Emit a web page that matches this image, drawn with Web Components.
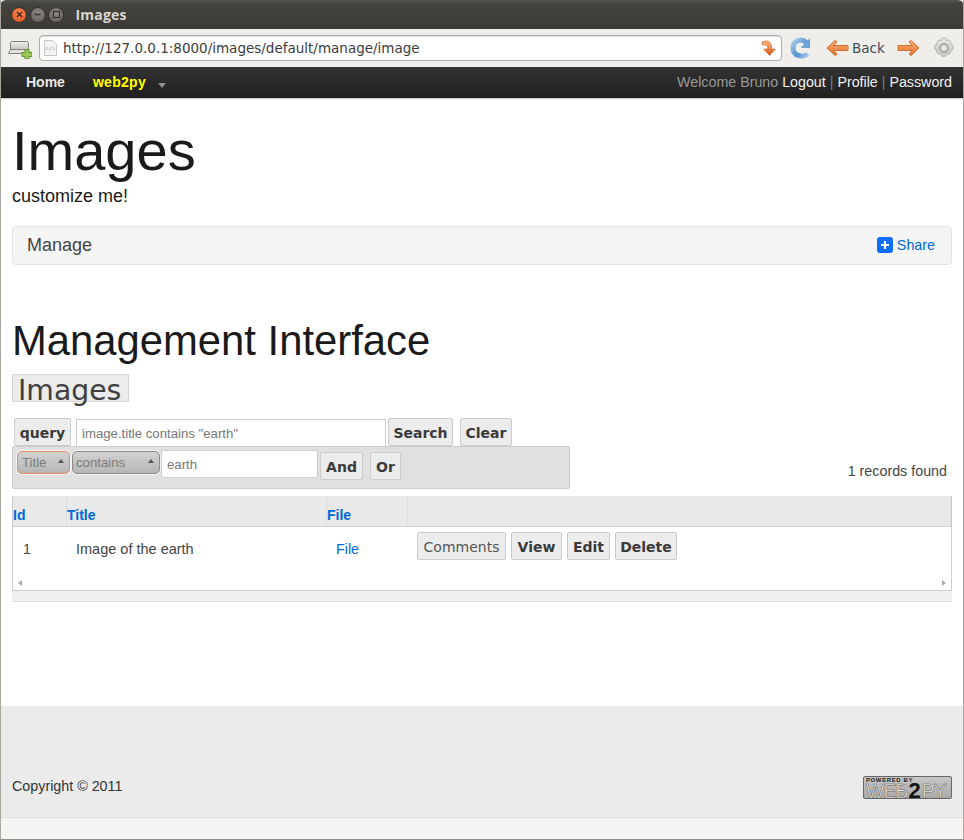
<!DOCTYPE html>
<html>
<head>
<meta charset="utf-8">
<title>Images</title>
<style>
  html, body { margin: 0; padding: 0; }
  body { font-family: "Liberation Sans", Arial, sans-serif; background: #fff; }
</style>
</head>
<body>
<browser-window>
  <title-bar slot="chrome">Images</title-bar>
  <tool-bar slot="chrome" url="http://127.0.0.1:8000/images/default/manage/image"></tool-bar>
  <nav-bar slot="chrome"></nav-bar>
  <page-header title-text="Images" subtitle="customize me!"></page-header>
  <manage-bar label="Manage"></manage-bar>
  <grid-section></grid-section>
  <page-footer slot="footer"></page-footer>
</browser-window>

<script>
class BrowserWindow extends HTMLElement {
    constructor() {
        super();
        this.attachShadow({ mode: 'open' });
    }

    connectedCallback() {
        this.shadowRoot.innerHTML = `
            <style>
                :host {
                    display: flex;
                    flex-direction: column;
                    box-sizing: border-box;
                    width: 964px;
                    height: 840px;
                    overflow: hidden;
                    border-left: 1px solid #a9a6a0;
                    border-right: 1px solid #a9a6a0;
                    border-bottom: 1px solid #8f8d88;
                    background: #fff;
                }
                .page {
                    flex: 1;
                    padding: 0 11px;
                    min-height: 0;
                }
            </style>
            <slot name="chrome"></slot>
            <div class="page"><slot></slot></div>
            <slot name="footer"></slot>
        `;
    }
}

class TitleBar extends HTMLElement {
    constructor() {
        super();
        this.attachShadow({ mode: 'open' });
    }

    connectedCallback() {
        this.shadowRoot.innerHTML = `
            <style>
                :host {
                    display: flex;
                    align-items: center;
                    height: 29px;
                    margin: 0 -1px;
                    padding-left: 11px;
                    box-sizing: border-box;
                    background: linear-gradient(#55534d 0, #45433e 4px, #3b3a36 100%);
                    border-radius: 6px 6px 0 0;
                    color: #d9d6ce;
                    font: bold 14px "Open Sans", "Noto Sans", sans-serif;
                    letter-spacing: 0.2px;
                }
                .btn {
                    width: 14px;
                    height: 14px;
                    border-radius: 50%;
                    margin-right: 2.500px;
                    background: radial-gradient(circle at 50% 35%, #8d8a83, #5d5b55);
                    border: 1px solid #34332f;
                    display: flex;
                    align-items: center;
                    justify-content: center;
                }
                .btn.close { background: radial-gradient(circle at 50% 35%, #f58a56, #dc4a1c); }
                svg { display: block; }
                .text { margin-left: 9px; }
            </style>
            <span class="btn close"><svg width="9" height="9" viewBox="0 0 9 9"><path d="M2 2l5 5M7 2l-5 5" stroke="#4a2010" stroke-width="1.4"/></svg></span>
            <span class="btn"><svg width="9" height="9" viewBox="0 0 9 9"><path d="M1.500 4.500h6" stroke="#33322e" stroke-width="1.6"/></svg></span>
            <span class="btn"><svg width="9" height="9" viewBox="0 0 9 9"><rect x="1.500" y="1.500" width="6" height="6" fill="none" stroke="#33322e" stroke-width="1.2"/></svg></span>
            <span class="text"><slot></slot></span>
        `;
    }
}

class ToolBar extends HTMLElement {
    constructor() {
        super();
        this.attachShadow({ mode: 'open' });
    }

    connectedCallback() {
        const url = this.getAttribute('url') || '';
        this.shadowRoot.innerHTML = `
            <style>
                :host {
                    display: flex;
                    align-items: center;
                    height: 38px;
                    box-sizing: border-box;
                    padding: 0 0 0 7px;
                    background: #f0eeeb;
                    color: #3c3c3c;
                    font: 13.5px "DejaVu Sans", sans-serif;
                }
                svg { display: block; flex: none; }
                .url {
                    display: flex;
                    flex: none;
                    align-items: center;
                    box-sizing: border-box;
                    width: 743px;
                    height: 26px;
                    margin: 0 8px 0 7px;
                    padding: 0 4px 0 4px;
                    background: #fff;
                    border: 1px solid #aeaca7;
                    border-radius: 4px;
                    box-shadow: inset 0 1px 1px #ddd;
                }
                .addr { flex: 1; margin-left: 6px; white-space: nowrap; }
                .back { margin: 0 12px 0 3px; color: #3c4a5a; }
                .gear { margin-left: 13px; }
            </style>
            <svg width="24" height="22" viewBox="0 0 24 22">
                <defs><linearGradient id="l1" x1="0" y1="0" x2="0" y2="1"><stop offset="0" stop-color="#efeeeb"/><stop offset="1" stop-color="#c6c4bf"/></linearGradient></defs>
                <path d="M3.500 4.500h16l1 1v7h-18v-7z" fill="url(#l1)" stroke="#7f7d78"/>
                <path d="M2.500 12.500h18l1 4h-21z" fill="#e4e2dd" stroke="#7f7d78"/>
                <path d="M17 12.500h4v3h3v4h-3v2.500h-4v-2.500h-3v-4h3z" fill="#9ccb5a" stroke="#5f8f2c"/>
            </svg>
            <div class="url">
                <svg width="13" height="16" viewBox="0 0 13 16">
                    <path d="M.5.500h8l4 4v11h-12z" fill="#f3f3f3" stroke="#c5c5c5"/>
                    <path d="M3.500 10l-1-1.500 1-1.500M9 10l1-1.500-1-1.500M7 6.500l-1.500 4" fill="none" stroke="#b4b4b4"/>
                </svg>
                <span class="addr">${url}</span>
                <svg width="16" height="18" viewBox="0 0 16 18">
                    <defs><linearGradient id="o1" x1="0" y1="0" x2="0" y2="1"><stop offset="0" stop-color="#f6b27c"/><stop offset="1" stop-color="#d95a18"/></linearGradient></defs>
                    <path d="M1 3c5.500-2.500 9.500-.5 9.500 5v2h4l-6 6.500-6-6.500h4v-1.500c0-2.500-2-3-5-2.500z" fill="url(#o1)" stroke="#d0641f" stroke-width=".6"/>
                </svg>
            </div>
            <svg width="22" height="22" viewBox="0 0 22 22">
                <defs><linearGradient id="b1" x1="0" y1="0" x2="1" y2="1"><stop offset="0" stop-color="#a9cdec"/><stop offset=".6" stop-color="#4f8fd0"/><stop offset="1" stop-color="#a9cdec"/></linearGradient></defs>
                <path d="M18 17c-4.500 4-15 2.500-15-6 0-8 9-10 13.500-5.500" fill="none" stroke="url(#b1)" stroke-width="5"/>
                <path d="M20 1v10h-9.500z" fill="#6ba4da"/>
            </svg>
            <svg style="margin-left:14px" width="23" height="18" viewBox="0 0 23 18">
                <defs><linearGradient id="o2" x1="0" y1="0" x2="0" y2="1"><stop offset="0" stop-color="#f6b27c"/><stop offset="1" stop-color="#e2702a"/></linearGradient></defs>
                <path d="M1 9l8-7.500 2 1.500-3.500 3.500h14.500v5h-14.500l3.500 3.500-2 1.500z" fill="url(#o2)" stroke="#d9702a" stroke-linejoin="round"/>
            </svg>
            <span class="back">Back</span>
            <svg width="23" height="18" viewBox="0 0 23 18">
                <defs><linearGradient id="o3" x1="0" y1="0" x2="0" y2="1"><stop offset="0" stop-color="#f6b27c"/><stop offset="1" stop-color="#e2702a"/></linearGradient></defs>
                <path d="M22 9l-8-7.500-2 1.500 3.500 3.500h-14.500v5h14.500l-3.500 3.500 2 1.500z" fill="url(#o3)" stroke="#d9702a" stroke-linejoin="round"/>
            </svg>
            <svg class="gear" width="22" height="22" viewBox="0 0 22 22">
                <defs><linearGradient id="g1" x1="0" y1="0" x2="0" y2="1"><stop offset="0" stop-color="#eaeae8"/><stop offset="1" stop-color="#c8c8c6"/></linearGradient></defs>
                <path d="M9 1h4l.6 2.800 2-.9 2.700 2.700-1.100 2 2.800.7v4l-2.800.6.900 2-2.700 2.700-2-1.100-.7 2.800h-4l-.6-2.800-2 1.100-2.700-2.700 1.100-2-2.800-.6v-4l2.800-.7-1.100-2 2.700-2.700 2 .9z" fill="url(#g1)" stroke="#a9a9a7" stroke-width=".8"/>
                <circle cx="11" cy="11" r="4.500" fill="#bdbdbb" stroke="#9c9c9a"/>
                <circle cx="11" cy="11" r="2.500" fill="#ececea"/>
            </svg>
        `;
    }
}

class NavBar extends HTMLElement {
    constructor() {
        super();
        this.attachShadow({ mode: 'open' });
    }

    connectedCallback() {
        this.shadowRoot.innerHTML = `
            <style>
                :host {
                    display: flex;
                    align-items: center;
                    height: 31px;
                    box-sizing: border-box;
                    padding: 0 11px 2px 25px;
                    background: linear-gradient(#333, #1e1e1e);
                    box-shadow: 0 1px 1px #ccc;
                    font: 14.25px "Liberation Sans", Arial, sans-serif;
                    color: #999;
                }
                b { color: #e8e8e8; font-size: 14px; }
                b.brand { color: #ffff00; margin-left: 28px; letter-spacing: .3px; }
                .caret {
                    width: 0;
                    height: 0;
                    margin: 7px 0 0 12px;
                    border-left: 4.500px solid transparent;
                    border-right: 4.500px solid transparent;
                    border-top: 5px solid #8e8e8e;
                }
                .right { margin-left: auto; white-space: nowrap; }
                a { color: #f2f2f2; }
                i { font-style: normal; color: #6f7f88; }
            </style>
            <b>Home</b>
            <b class="brand">web2py</b>
            <span class="caret"></span>
            <span class="right">Welcome Bruno <a>Logout</a> <i>|</i> <a>Profile</a> <i>|</i> <a>Password</a></span>
        `;
    }
}

class PageHeader extends HTMLElement {
    constructor() {
        super();
        this.attachShadow({ mode: 'open' });
    }

    connectedCallback() {
        this.shadowRoot.innerHTML = `
            <style>
                :host {
                    display: block;
                    padding-top: 20px;
                    color: #1a1a1a;
                    font-family: "Liberation Sans", Arial, sans-serif;
                }
                h1 { margin: 0 0 2px; font-size: 56px; font-weight: normal; line-height: 66px; }
                p { margin: 0; font-size: 18px; line-height: 21px; }
            </style>
            <h1>${this.getAttribute('title-text')}</h1>
            <p>${this.getAttribute('subtitle')}</p>
        `;
    }
}

class ManageBar extends HTMLElement {
    constructor() {
        super();
        this.attachShadow({ mode: 'open' });
    }

    connectedCallback() {
        this.shadowRoot.innerHTML = `
            <style>
                :host {
                    display: flex;
                    align-items: center;
                    justify-content: space-between;
                    box-sizing: border-box;
                    height: 39px;
                    margin-top: 19px;
                    padding: 0 16px 0 14px;
                    background: #f5f5f5;
                    border: 1px solid #e3e3e3;
                    border-radius: 4px;
                    font-family: "Liberation Sans", Arial, sans-serif;
                }
                .label { font-size: 18px; color: #444; }
                .share { display: flex; align-items: center; gap: 4px; padding-bottom: 2px; font-size: 14.3px; color: #0069d6; }
                svg { display: block; }
            </style>
            <span class="label">${this.getAttribute('label')}</span>
            <span class="share">
                <svg width="16" height="16" viewBox="0 0 16 16"><rect width="16" height="16" rx="3" fill="#0d6efd"/><path d="M8 4v8M4 8h8" stroke="#fff" stroke-width="2.200"/></svg>
                Share
            </span>
        `;
    }
}

class GridButton extends HTMLElement {
    constructor() {
        super();
        this.attachShadow({ mode: 'open' });
    }

    connectedCallback() {
        this.shadowRoot.innerHTML = `
            <style>
                :host {
                    display: inline-flex;
                    flex: none;
                    align-items: center;
                    justify-content: center;
                    box-sizing: border-box;
                    height: 28px;
                    padding-top: 2px;
                    background: #ececec;
                    border: 1px solid #ccc;
                    border-radius: 2px;
                    color: #3a3a3a;
                    font: bold 14px "DejaVu Sans", sans-serif;
                    white-space: nowrap;
                }
                :host([plain]) { font-weight: normal; color: #555; }
            </style>
            <slot></slot>
        `;
    }
}

class GridSection extends HTMLElement {
    constructor() {
        super();
        this.attachShadow({ mode: 'open' });
    }

    connectedCallback() {
        this.shadowRoot.innerHTML = `
            <style>
                :host {
                    display: block;
                    font-family: "Liberation Sans", Arial, sans-serif;
                    color: #444;
                }
                h2 {
                    margin: 52px 0 0;
                    font-size: 41.8px;
                    font-weight: normal;
                    line-height: 48px;
                    color: #1a1a1a;
                }
                .name {
                    box-sizing: border-box;
                    width: 117px;
                    height: 28px;
                    margin-top: 9px;
                    padding-left: 5px;
                    background: #ececec;
                    border: 1px solid #d4d4d4;
                    border-radius: 1px;
                    font: 28.3px/32px "DejaVu Sans", sans-serif;
                    color: #3f3f3f;
                }
                .query {
                    display: flex;
                    align-items: flex-end;
                    height: 28px;
                    margin-top: 16px;
                    padding-left: 2px;
                }
                .query input {
                    box-sizing: border-box;
                    width: 310px;
                    height: 27px;
                    margin: 0 2px 0 5px;
                    padding: 0 5px;
                    border: 1px solid #ccc;
                    border-bottom: none;
                    font: 13.2px "Liberation Sans", Arial, sans-serif;
                    color: #333;
                    outline: none;
                }
                input::placeholder { color: #777; opacity: 1; }
                .clear { margin-left: 7px; }
                .mid { display: flex; align-items: flex-start; justify-content: space-between; }
                .builder {
                    display: flex;
                    align-items: flex-start;
                    box-sizing: border-box;
                    width: 558px;
                    height: 43px;
                    padding: 4px 4px;
                    background: #e0e0e0;
                    border: 1px solid #ccc;
                    border-radius: 2px;
                }
                .sel {
                    display: flex;
                    align-items: center;
                    justify-content: space-between;
                    box-sizing: border-box;
                    height: 23px;
                    padding: 0 5px 1px 4px;
                    border: 1px solid #8a8a86;
                    border-radius: 5px;
                    background: linear-gradient(#d2d2d2, #b6b6b6);
                    font: 13.2px "Liberation Sans", Arial, sans-serif;
                    color: #7c7c7c;
                }
                .sel.title { width: 53px; margin-right: 2px; border-color: #e08a5c; box-shadow: 0 0 0 1px #f4f4f4; }
                .sel.op { width: 88px; margin-right: 1px; padding-left: 3px; box-shadow: 0 0 0 1px #f4f4f4; }
                .sel::after {
                    content: "";
                    margin-bottom: 3px;
                    border-left: 3.500px solid transparent;
                    border-right: 3.500px solid transparent;
                    border-bottom: 4px solid #555;
                }
                .builder input {
                    box-sizing: border-box;
                    width: 157px;
                    height: 28px;
                    margin: -1px 2px 0 0;
                    padding: 0 5px;
                    border: 1px solid #ccc;
                    border-radius: 2px;
                    font: 13.2px "Liberation Sans", Arial, sans-serif;
                    outline: none;
                }
                .builder grid-button { margin: 1px 7px 0 0; }
                .count { font-size: 14.3px; padding: 17px 5px 0 0; }
                .table {
                    display: grid;
                    grid-template-columns: 54px 260px 81px 1fr;
                    grid-template-rows: 31px 1fr;
                    margin-top: 7px;
                    box-sizing: border-box;
                    height: 95px;
                    border: 1px solid #ccc;
                    border-top: none;
                    position: relative;
                }
                .th {
                    display: flex;
                    align-items: flex-end;
                    padding-bottom: 3px;
                    box-sizing: border-box;
                    background: #e9e9e9;
                    border-bottom: 1px solid #d2d2d2;
                    border-right: 1px solid #ddd;
                    font-size: 14px;
                    font-weight: bold;
                    color: #0069d6;
                }
                .th:last-of-type { border-right: none; }
                .td { padding: 14px 9px 0; font-size: 14.3px; line-height: 16px; }
                .td.id { padding-left: 10px; }
                .td.wide { font-size: 14.5px; }
                .td a { color: #0069d6; }
                .actions { display: flex; gap: 5px; align-items: flex-start; padding: 5px 0 0 9px; }
                .arrow {
                    position: absolute;
                    bottom: 4px;
                    width: 0;
                    height: 0;
                    border-top: 3px solid transparent;
                    border-bottom: 3px solid transparent;
                }
                .arrow.l { left: 5px; border-right: 4px solid #aaa; }
                .arrow.r { right: 5px; border-left: 4px solid #aaa; }
                .band { height: 10px; background: #f0f0f0; border-bottom: 1px solid #dcdcdc; }
            </style>
            <h2>Management Interface</h2>
            <div class="name">Images</div>
            <div class="query">
                <grid-button style="width:57px">query</grid-button>
                <input placeholder='image.title contains "earth"'>
                <grid-button style="width:65px">Search</grid-button>
                <grid-button class="clear" style="width:52px">Clear</grid-button>
            </div>
            <div class="mid">
                <div class="builder">
                    <span class="sel title">Title</span>
                    <span class="sel op">contains</span>
                    <input placeholder="earth">
                    <grid-button style="width:43px">And</grid-button>
                    <grid-button style="width:31px">Or</grid-button>
                </div>
                <span class="count">1 records found</span>
            </div>
            <div class="table">
                <div class="th">Id</div>
                <div class="th">Title</div>
                <div class="th">File</div>
                <div class="th"></div>
                <div class="td id">1</div>
                <div class="td wide">Image of the earth</div>
                <div class="td"><a>File</a></div>
                <div class="actions">
                    <grid-button plain style="width:89px">Comments</grid-button>
                    <grid-button style="width:51px">View</grid-button>
                    <grid-button style="width:43px">Edit</grid-button>
                    <grid-button style="width:62px">Delete</grid-button>
                </div>
                <span class="arrow l"></span>
                <span class="arrow r"></span>
            </div>
            <div class="band"></div>
        `;
    }
}

class PageFooter extends HTMLElement {
    constructor() {
        super();
        this.attachShadow({ mode: 'open' });
    }

    connectedCallback() {
        this.shadowRoot.innerHTML = `
            <style>
                :host {
                    display: block;
                    font-family: "Liberation Sans", Arial, sans-serif;
                }
                .main {
                    display: flex;
                    align-items: flex-start;
                    justify-content: space-between;
                    box-sizing: border-box;
                    height: 112px;
                    padding: 70px 11px 0;
                    background: #ebebeb;
                    font-size: 14.3px;
                    color: #333;
                    border-bottom: 1px solid #dedede;
                }
                .logo {
                    display: flex;
                    flex-direction: column;
                    box-sizing: border-box;
                    width: 89px;
                    height: 23px;
                    padding: 0 2px;
                    background: linear-gradient(#c6c6c6, #a9a9a9);
                    border: 1px solid #666;
                    border-radius: 2px;
                    font-family: "Liberation Sans", Arial, sans-serif;
                }
                .pow {
                    font-size: 6px;
                    font-weight: bold;
                    line-height: 6px;
                    color: #222;
                    letter-spacing: .6px;
                }
                .word {
                    display: flex;
                    align-items: baseline;
                    height: 15px;
                    font-size: 19.5px;
                    line-height: 15px;
                    letter-spacing: -1px;
                    color: #ececec;
                    -webkit-text-stroke: .5px #555;
                    white-space: nowrap;
                }
                .word b { color: #111; font-size: 22px; letter-spacing: 0; margin: 0 1px; -webkit-text-stroke: 0; }
                .strip { height: 21px; background: #f5f4f2; }
            </style>
            <div class="main">
                <span style="margin-top:2px">Copyright © 2011</span>
                <div class="logo"><span class="pow">POWERED BY</span><span class="word">WEB<b>2</b>PY</span></div>
            </div>
            <div class="strip"></div>
        `;
    }
}

customElements.define('browser-window', BrowserWindow);
customElements.define('title-bar', TitleBar);
customElements.define('tool-bar', ToolBar);
customElements.define('nav-bar', NavBar);
customElements.define('page-header', PageHeader);
customElements.define('manage-bar', ManageBar);
customElements.define('grid-button', GridButton);
customElements.define('grid-section', GridSection);
customElements.define('page-footer', PageFooter);
</script>
</body>
</html>
